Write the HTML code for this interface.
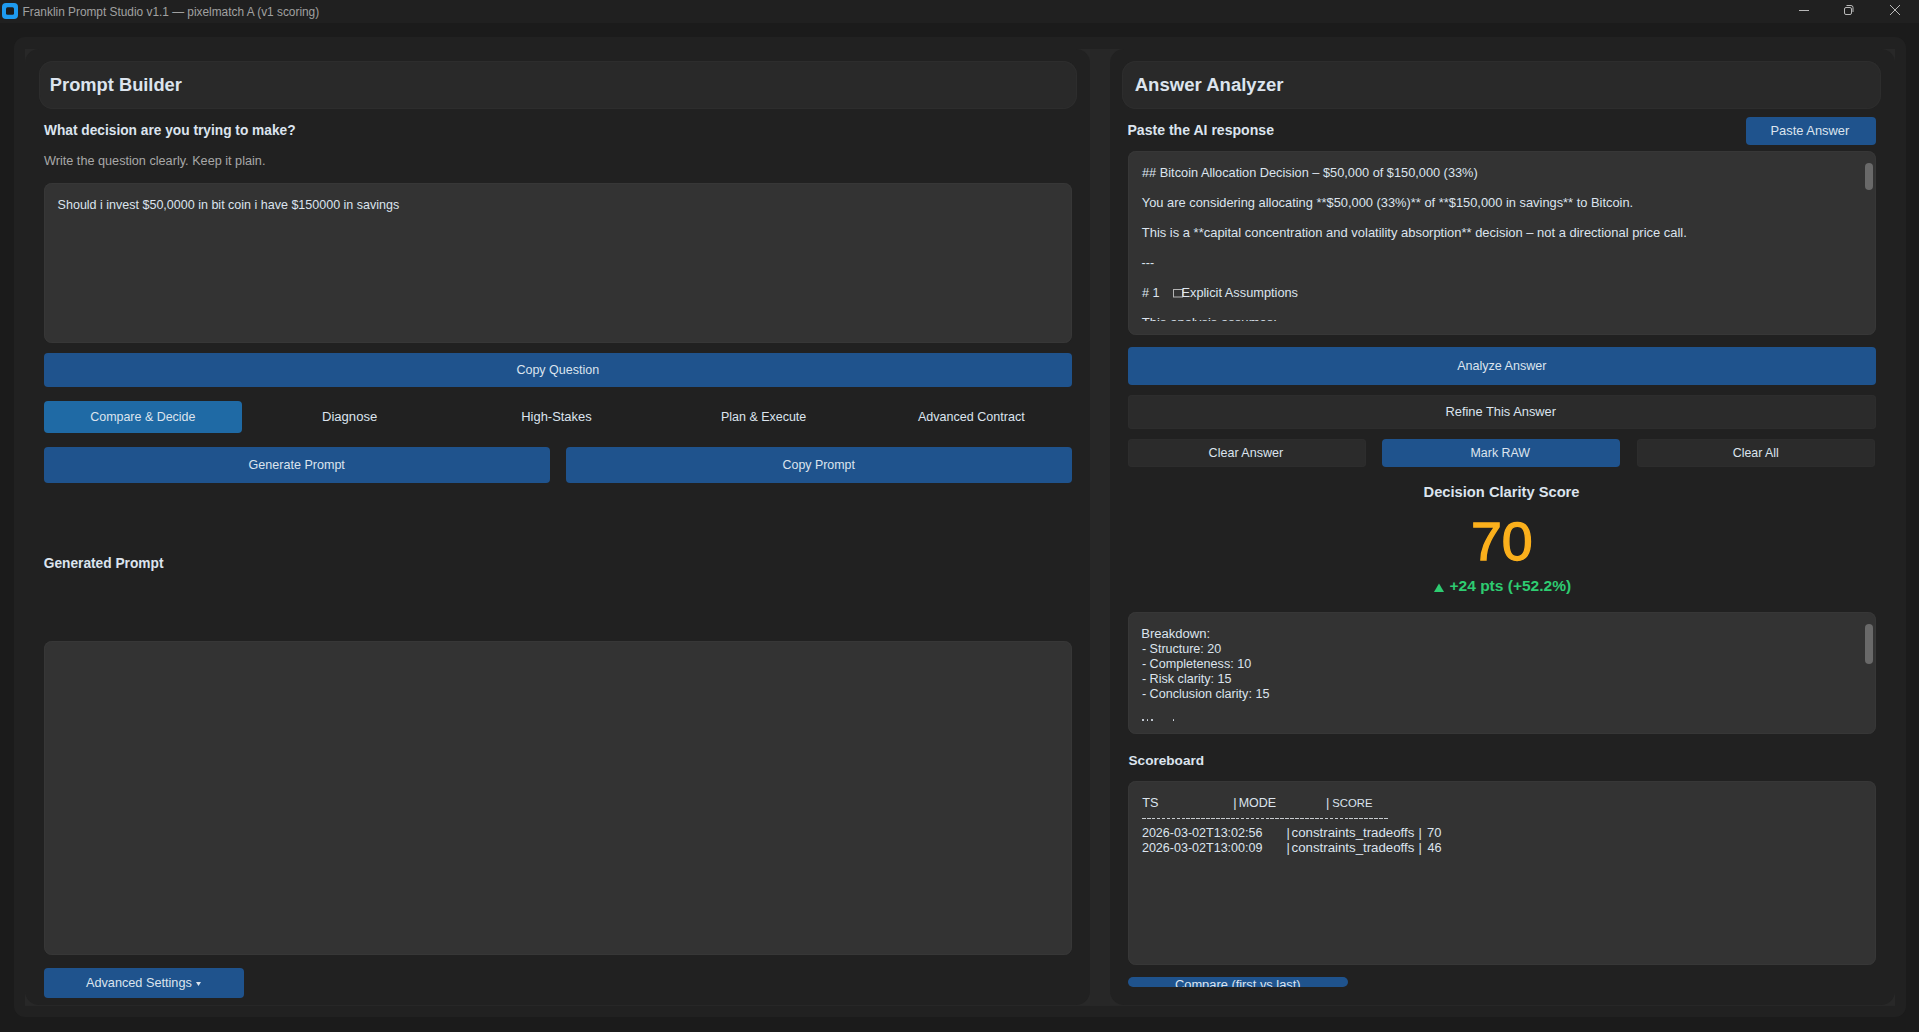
<!DOCTYPE html>
<html><head><meta charset="utf-8"><style>
html,body{margin:0;padding:0;}
body{width:1919px;height:1032px;background:#1b1b1b;position:relative;overflow:hidden;font-family:"Liberation Sans",sans-serif;}
.r{position:absolute;}
.t{position:absolute;white-space:pre;line-height:normal;}
</style></head><body>
<div class="r" style="left:0px;top:0px;width:1919px;height:23px;background:#202020;border-radius:0px;"></div>
<div class="r" style="left:14px;top:37px;width:1892px;height:980px;background:#212121;border-radius:11px;"></div>
<div class="r" style="left:25px;top:49px;width:14px;height:14px;background:#282828;border-radius:0px;"></div>
<div class="r" style="left:25px;top:991px;width:14px;height:14px;background:#282828;border-radius:0px;"></div>
<div class="r" style="left:1076px;top:49px;width:14px;height:14px;background:#282828;border-radius:0px;"></div>
<div class="r" style="left:1076px;top:991px;width:14px;height:14px;background:#282828;border-radius:0px;"></div>
<div class="r" style="left:1110px;top:49px;width:14px;height:14px;background:#282828;border-radius:0px;"></div>
<div class="r" style="left:1110px;top:991px;width:14px;height:14px;background:#282828;border-radius:0px;"></div>
<div class="r" style="left:1881px;top:49px;width:14px;height:14px;background:#282828;border-radius:0px;"></div>
<div class="r" style="left:1881px;top:991px;width:14px;height:14px;background:#282828;border-radius:0px;"></div>
<div class="r" style="left:1090px;top:49px;width:20px;height:956px;background:#272727;border-radius:0px;"></div>
<div class="r" style="left:25px;top:49px;width:1065px;height:956px;background:#212121;border-radius:14px;"></div>
<div class="r" style="left:1110px;top:49px;width:785px;height:956px;background:#212121;border-radius:14px;"></div>
<div class="r" style="left:25px;top:1005px;width:1870px;height:1px;background:#272727;border-radius:0px;"></div>
<div class="r" style="left:39px;top:61px;width:1038px;height:48px;background:#292929;border-radius:14px;box-shadow:inset 0 0 0 1px #2d2d2d"></div>
<div class="r" style="left:1122px;top:61px;width:759px;height:48px;background:#292929;border-radius:14px;box-shadow:inset 0 0 0 1px #2d2d2d"></div>
<div class="r" style="left:44px;top:183px;width:1028px;height:160px;background:#333333;border-radius:8px;box-shadow:inset 0 0 0 1px #373737"></div>
<div class="r" style="left:44px;top:353px;width:1028px;height:34px;background:#1f538d;border-radius:4px;"></div>
<div class="r" style="left:44px;top:401px;width:198px;height:32px;background:#1f6aa5;border-radius:4px;"></div>
<div class="r" style="left:44px;top:447px;width:506px;height:36px;background:#1f538d;border-radius:4px;"></div>
<div class="r" style="left:566px;top:447px;width:506px;height:36px;background:#1f538d;border-radius:4px;"></div>
<div class="r" style="left:44px;top:641px;width:1028px;height:314px;background:#333333;border-radius:8px;box-shadow:inset 0 0 0 1px #373737"></div>
<div class="r" style="left:44px;top:968px;width:200px;height:30px;background:#1f538d;border-radius:4px;"></div>
<div class="r" style="left:1746px;top:117px;width:130px;height:28px;background:#1f538d;border-radius:4px;"></div>
<div class="r" style="left:1128px;top:151px;width:748px;height:184px;background:#333333;border-radius:8px;box-shadow:inset 0 0 0 1px #373737"></div>
<div class="r" style="left:1865px;top:163px;width:8px;height:27px;background:#696969;border-radius:4px;"></div>
<div class="r" style="left:1128px;top:347px;width:748px;height:38px;background:#1f538d;border-radius:4px;"></div>
<div class="r" style="left:1128px;top:395px;width:748px;height:34px;background:#2b2b2b;border-radius:4px;box-shadow:inset 0 0 0 1px #2d2d2d"></div>
<div class="r" style="left:1128px;top:439px;width:238px;height:28px;background:#2b2b2b;border-radius:4px;box-shadow:inset 0 0 0 1px #2d2d2d"></div>
<div class="r" style="left:1382px;top:439px;width:238px;height:28px;background:#1f538d;border-radius:4px;"></div>
<div class="r" style="left:1637px;top:439px;width:238px;height:28px;background:#2b2b2b;border-radius:4px;box-shadow:inset 0 0 0 1px #2d2d2d"></div>
<div class="r" style="left:1128px;top:612px;width:748px;height:122px;background:#333333;border-radius:8px;box-shadow:inset 0 0 0 1px #373737"></div>
<div class="r" style="left:1865px;top:624px;width:8px;height:40px;background:#696969;border-radius:4px;"></div>
<div class="r" style="left:1128px;top:781px;width:748px;height:184px;background:#333333;border-radius:8px;box-shadow:inset 0 0 0 1px #373737"></div>
<div class="r" style="left:1128px;top:977px;width:220px;height:10px;background:#1f538d;border-radius:5px;"></div>
<div class="r" style="left:1142px;top:818px;width:247px;height:1px;background:;border-radius:0px;background:repeating-linear-gradient(90deg,#c8ccd0 0 3.6px,transparent 3.6px 4.94px)"></div>
<div class="r" style="left:1142.2px;top:719.2px;width:1.599999999999909px;height:1.599999999999909px;background:#dce4ee;border-radius:0.8px;"></div>
<div class="r" style="left:1146.7px;top:719.2px;width:1.599999999999909px;height:1.599999999999909px;background:#dce4ee;border-radius:0.8px;"></div>
<div class="r" style="left:1151.2px;top:719.2px;width:1.599999999999909px;height:1.599999999999909px;background:#dce4ee;border-radius:0.8px;"></div>
<div class="r" style="left:1172.7px;top:719.2px;width:1.599999999999909px;height:1.599999999999909px;background:#dce4ee;border-radius:0.8px;"></div>
<svg class="r" style="left:0;top:0" width="24" height="22"><rect x="2" y="3" width="16" height="16" rx="4" fill="#1e9bf0"/><rect x="6" y="7.2" width="8" height="7.6" rx="1.5" fill="#1c1c1c"/></svg>
<svg class="r" style="left:1790px;top:0" width="129" height="22"><line x1="9" y1="10.5" x2="19" y2="10.5" stroke="#b8b8b8" stroke-width="1"/><rect x="54.5" y="7.5" width="7" height="7" rx="1.5" fill="none" stroke="#b8b8b8" stroke-width="1"/><path d="M56.5 5.5 h4.5 a2 2 0 0 1 2 2 v4.5" fill="none" stroke="#b8b8b8" stroke-width="1"/><path d="M100 5 L110 15 M110 5 L100 15" stroke="#b8b8b8" stroke-width="1"/></svg>
<svg class="r" style="left:1434px;top:583px" width="11" height="9"><path d="M0 9 L5 0.5 L10 9 Z" fill="#2ecc71"/></svg>
<svg class="r" style="left:1172px;top:288px" width="12" height="10"><rect x="1.5" y="1.5" width="9" height="7.5" fill="none" stroke="#b4b4b4" stroke-width="1"/></svg>
<svg class="r" style="left:195px;top:980px" width="8" height="8"><path d="M1 2 L6 2 L3.5 6 Z" fill="#dce4ee"/></svg>
<div class="t" style="left:22.57px;top:5.37px;font-size:11.86px;font-weight:normal;color:#a0a0a0;">Franklin Prompt Studio v1.1 — pixelmatch A (v1 scoring)</div>
<div class="t" style="left:49.86px;top:73.65px;font-size:18.29px;font-weight:bold;color:#dce4ee;">Prompt Builder</div>
<div class="t" style="left:44.00px;top:122.85px;font-size:13.72px;font-weight:bold;color:#dce4ee;">What decision are you trying to make?</div>
<div class="t" style="left:44.00px;top:154.02px;font-size:12.68px;font-weight:normal;color:#a8a8a8;">Write the question clearly. Keep it plain.</div>
<div class="t" style="left:57.61px;top:197.96px;font-size:12.52px;font-weight:normal;color:#dce4ee;">Should i invest $50,0000 in bit coin i have $150000 in savings</div>
<div class="t" style="left:516.41px;top:363.25px;font-size:12.53px;font-weight:normal;color:#dce4ee;">Copy Question</div>
<div class="t" style="left:90.22px;top:410.02px;font-size:12.46px;font-weight:normal;color:#dce4ee;">Compare &amp; Decide</div>
<div class="t" style="left:321.98px;top:409.45px;font-size:13.08px;font-weight:normal;color:#dce4ee;">Diagnose</div>
<div class="t" style="left:521.29px;top:408.59px;font-size:12.93px;font-weight:normal;color:#dce4ee;">High-Stakes</div>
<div class="t" style="left:721.03px;top:410.01px;font-size:12.47px;font-weight:normal;color:#dce4ee;">Plan &amp; Execute</div>
<div class="t" style="left:918.00px;top:409.93px;font-size:12.55px;font-weight:normal;color:#dce4ee;">Advanced Contract</div>
<div class="t" style="left:248.61px;top:457.93px;font-size:12.56px;font-weight:normal;color:#dce4ee;">Generate Prompt</div>
<div class="t" style="left:782.62px;top:458.08px;font-size:12.40px;font-weight:normal;color:#dce4ee;">Copy Prompt</div>
<div class="t" style="left:43.77px;top:555.86px;font-size:13.72px;font-weight:bold;color:#dce4ee;">Generated Prompt</div>
<div class="t" style="left:86.00px;top:975.70px;font-size:12.70px;font-weight:normal;color:#dce4ee;">Advanced Settings</div>
<div class="t" style="left:1134.71px;top:74.40px;font-size:18.56px;font-weight:bold;color:#dce4ee;">Answer Analyzer</div>
<div class="t" style="left:1127.42px;top:121.52px;font-size:14.08px;font-weight:bold;color:#dce4ee;">Paste the AI response</div>
<div class="t" style="left:1770.49px;top:122.61px;font-size:12.90px;font-weight:normal;color:#dce4ee;">Paste Answer</div>
<div class="t" style="left:1142.00px;top:164.53px;font-size:12.78px;font-weight:normal;color:#dce4ee;">## Bitcoin Allocation Decision – $50,000 of $150,000 (33%)</div>
<div class="t" style="left:1141.80px;top:195.44px;font-size:12.87px;font-weight:normal;color:#dce4ee;">You are considering allocating **$50,000 (33%)** of **$150,000 in savings** to Bitcoin.</div>
<div class="t" style="left:1141.80px;top:225.16px;font-size:12.96px;font-weight:normal;color:#dce4ee;">This is a **capital concentration and volatility absorption** decision – not a directional price call.</div>
<div class="t" style="left:1141.61px;top:255.63px;font-size:12.45px;font-weight:normal;color:#dce4ee;">---</div>
<div class="t" style="left:1142.00px;top:285.59px;font-size:12.60px;font-weight:normal;color:#dce4ee;"># 1</div>
<div class="t" style="left:1181.50px;top:285.41px;font-size:12.79px;font-weight:normal;color:#dce4ee;">Explicit Assumptions</div>
<div class="r" style="left:1128px;top:151px;width:748px;height:170px;overflow:hidden"><div class="t" style="left:13.80px;top:164.15px;font-size:13.08px;font-weight:normal;color:#dce4ee;">This analysis assumes:</div></div>
<div class="r" style="left:1128px;top:977px;width:220px;height:10px;overflow:hidden"><div class="t" style="left:47.00px;top:0.16px;font-size:12.85px;font-weight:normal;color:#dce4ee;">Compare (first vs last)</div></div>
<div class="t" style="left:1457.20px;top:358.94px;font-size:12.55px;font-weight:normal;color:#dce4ee;">Analyze Answer</div>
<div class="t" style="left:1445.49px;top:403.64px;font-size:12.87px;font-weight:normal;color:#dce4ee;">Refine This Answer</div>
<div class="t" style="left:1208.61px;top:445.95px;font-size:12.54px;font-weight:normal;color:#dce4ee;">Clear Answer</div>
<div class="t" style="left:1470.53px;top:446.06px;font-size:12.42px;font-weight:normal;color:#dce4ee;">Mark RAW</div>
<div class="t" style="left:1732.72px;top:446.11px;font-size:12.36px;font-weight:normal;color:#dce4ee;">Clear All</div>
<div class="t" style="left:1423.58px;top:483.96px;font-size:14.69px;font-weight:bold;color:#dce4ee;">Decision Clarity Score</div>
<div class="t" style="left:1471.00px;top:511.22px;font-size:53.48px;font-weight:normal;color:#fbb01c;transform:scaleX(1.0388);transform-origin:2.51px 0;-webkit-text-stroke:1.3px #fbb01c;">70</div>
<div class="t" style="left:1449.51px;top:576.60px;font-size:15.52px;font-weight:bold;color:#2ecc71;">+24 pts (+52.2%)</div>
<div class="t" style="left:1141.28px;top:626.48px;font-size:13.05px;font-weight:normal;color:#dce4ee;">Breakdown:</div>
<div class="t" style="left:1141.91px;top:641.95px;font-size:12.53px;font-weight:normal;color:#dce4ee;">- Structure: 20</div>
<div class="t" style="left:1141.91px;top:656.87px;font-size:12.62px;font-weight:normal;color:#dce4ee;">- Completeness: 10</div>
<div class="t" style="left:1141.91px;top:671.89px;font-size:12.60px;font-weight:normal;color:#dce4ee;">- Risk clarity: 15</div>
<div class="t" style="left:1141.91px;top:686.88px;font-size:12.62px;font-weight:normal;color:#dce4ee;">- Conclusion clarity: 15</div>
<div class="t" style="left:1128.49px;top:752.95px;font-size:13.62px;font-weight:bold;color:#dce4ee;">Scoreboard</div>
<div class="t" style="left:1142.30px;top:795.79px;font-size:12.70px;font-weight:normal;color:#dce4ee;">TS</div>
<div class="t" style="left:1233.30px;top:794.70px;font-size:12.80px;font-weight:normal;color:#dce4ee;">|</div>
<div class="t" style="left:1238.63px;top:796.01px;font-size:12.47px;font-weight:normal;color:#dce4ee;">MODE</div>
<div class="t" style="left:1326.00px;top:794.70px;font-size:12.80px;font-weight:normal;color:#dce4ee;">|</div>
<div class="t" style="left:1332.25px;top:797.08px;font-size:11.31px;font-weight:normal;color:#dce4ee;">SCORE</div>
<div class="t" style="left:1286.50px;top:824.70px;font-size:12.80px;font-weight:normal;color:#dce4ee;">|</div>
<div class="t" style="left:1291.59px;top:825.28px;font-size:13.26px;font-weight:normal;color:#dce4ee;">constraints_tradeoffs</div>
<div class="t" style="left:1418.60px;top:824.70px;font-size:12.80px;font-weight:normal;color:#dce4ee;">|</div>
<div class="t" style="left:1286.50px;top:839.70px;font-size:12.80px;font-weight:normal;color:#dce4ee;">|</div>
<div class="t" style="left:1291.59px;top:840.28px;font-size:13.26px;font-weight:normal;color:#dce4ee;">constraints_tradeoffs</div>
<div class="t" style="left:1418.60px;top:839.70px;font-size:12.80px;font-weight:normal;color:#dce4ee;">|</div>
<div class="t" style="left:1141.91px;top:825.95px;font-size:12.54px;font-weight:normal;color:#dce4ee;">2026-03-02T13:02:56</div>
<div class="t" style="left:1427.00px;top:824.63px;font-size:12.88px;font-weight:normal;color:#dce4ee;">70</div>
<div class="t" style="left:1141.91px;top:840.95px;font-size:12.54px;font-weight:normal;color:#dce4ee;">2026-03-02T13:00:09</div>
<div class="t" style="left:1427.40px;top:840.81px;font-size:12.69px;font-weight:normal;color:#dce4ee;">46</div>
</body></html>
